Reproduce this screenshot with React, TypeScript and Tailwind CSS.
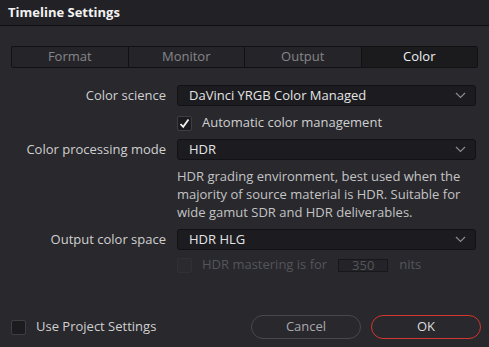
import React, { useState } from 'react'

const font = { fontFamily: '"Open Sans", "Noto Sans", sans-serif' }

function Chevron() {
  return (
    <svg width="11" height="7" viewBox="0 0 11 7" className="shrink-0">
      <path d="M1 1 L5.5 5.5 L10 1" fill="none" stroke="#8a8a90" strokeWidth="1.2" />
    </svg>
  )
}

function Select({ value }: { value: string }) {
  return (
    <div className="flex items-center justify-between w-[299px] h-[21px] pl-[11px] pr-[9px] bg-[#1c1c20] border border-[#121214] rounded-[3px] text-[13px] text-[#e4e4e4]">
      <span>{value}</span>
      <Chevron />
    </div>
  )
}

function Check({ checked, disabled }: { checked?: boolean; disabled?: boolean }) {
  return (
    <div
      className={
        'w-[15px] h-[15px] rounded-[2px] border flex items-center justify-center shrink-0 ' +
        (disabled ? 'border-[#303035] bg-[#2a2a2f]' : 'border-[#3e3e44] bg-[#1c1c1f]')
      }
    >
      {checked && (
        <svg width="11" height="11" viewBox="0 0 11 11">
          <path d="M1.5 6 L4.2 8.8 L9.5 1.5" fill="none" stroke="#f2f2f2" strokeWidth="1.8" />
        </svg>
      )}
    </div>
  )
}

export default function App() {
  const [tab] = useState('Color')
  const tabs = ['Format', 'Monitor', 'Output', 'Color']

  return (
    <div className="w-[489px] h-[347px] bg-[#28282d] flex flex-col overflow-hidden" style={font}>
      <div className="h-[26px] bg-[#222226] border-b border-[#101012] flex items-center pl-[8px] text-[13px] font-bold text-[#f2f2f2]">
        Timeline Settings
      </div>

      <div className="mx-[11px] mt-[20px] h-[22px] flex border border-[#111113] rounded-[2px] bg-[#252529]">
        {tabs.map((t, i) => (
          <div
            key={t}
            className={
              'flex-1 flex items-center justify-center text-[13px] ' +
              (i > 0 ? 'border-l border-[#111113] ' : '') +
              (t === tab ? 'bg-[#1b1b1e] text-[#f0f0f0]' : 'text-[#85858a]')
            }
          >
            {t}
          </div>
        ))}
      </div>

      <div className="mt-[17px] flex items-center">
        <div className="w-[166px] text-right text-[13px] text-[#d0d0d0]">Color science</div>
        <div className="ml-[11px]">
          <Select value="DaVinci YRGB Color Managed" />
        </div>
      </div>

      <div className="mt-[9px] ml-[177px] flex items-center h-[16px] gap-[10px] text-[13px] text-[#d0d0d0]">
        <Check checked />
        <span>Automatic color management</span>
      </div>

      <div className="mt-[8px] flex items-center">
        <div className="w-[166px] text-right text-[13px] text-[#d0d0d0]">Color processing mode</div>
        <div className="ml-[11px]">
          <Select value="HDR" />
        </div>
      </div>

      <div className="mt-[7px] ml-[177px] w-[299px] text-[13px] leading-[18px] text-[#c4c4c4]">
        HDR grading environment, best used when the
        <br />
        majority of source material is HDR. Suitable for
        <br />
        wide gamut SDR and HDR deliverables.
      </div>

      <div className="mt-[8px] flex items-center">
        <div className="w-[166px] text-right text-[13px] text-[#d0d0d0]">Output color space</div>
        <div className="ml-[11px]">
          <Select value="HDR HLG" />
        </div>
      </div>

      <div className="mt-[7px] ml-[177px] flex items-center h-[16px] text-[13px] text-[#55555a]">
        <Check disabled />
        <span className="ml-[10px]">HDR mastering is for</span>
        <div className="ml-[11px] w-[50px] h-[13px] border border-[#18181b] bg-[#242428] flex items-center justify-center leading-none">
          350
        </div>
        <span className="ml-[11px]">nits</span>
      </div>

      <div className="mt-auto mb-[8px] flex items-center pl-[11px] pr-[8px]">
        <div className="flex items-center gap-[10px] text-[13px] text-[#d0d0d0]">
          <Check />
          <span>Use Project Settings</span>
        </div>
        <div className="ml-auto flex gap-[10px]">
          <button className="w-[110px] h-[24px] rounded-full border border-[#48484e] text-[13px] text-[#a8a8ac]">
            Cancel
          </button>
          <button className="w-[110px] h-[24px] rounded-full border border-[#d3372e] text-[13px] text-[#dcdcdc]">
            OK
          </button>
        </div>
      </div>
    </div>
  )
}
